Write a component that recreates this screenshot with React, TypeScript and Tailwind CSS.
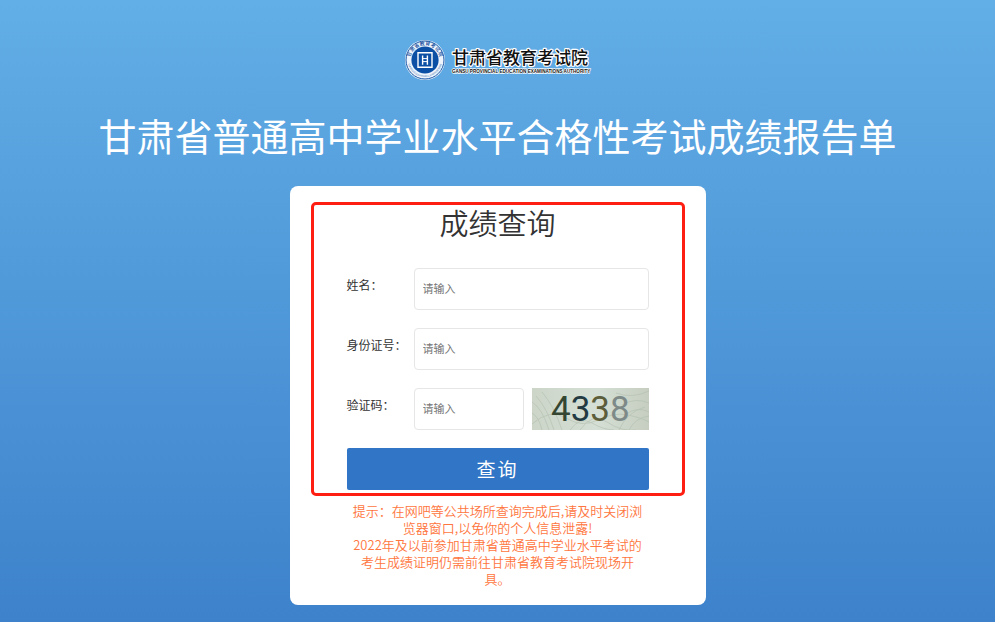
import React, { useState } from 'react';

const CODE_DIGITS = [
  { value: '4', color: '#344632' },
  { value: '3', color: '#233a42' },
  { value: '3', color: '#5c5d3a' },
  { value: '8', color: '#7d8a88' },
];

const inputClass =
  'h-[42px] min-w-0 rounded-[4px] border border-[#e6e6e6] bg-white px-2 pb-[2px] text-[11px] text-[#333333] placeholder:text-[#757575] focus:border-[#3075c6] focus:outline-none';

const labelClass = 'w-[67px] shrink-0 text-xs leading-[34px] text-[#333333]';

const Logo: React.FC = () => (
  <svg width="188" height="42" viewBox="0 0 188 42" role="img" aria-label="甘肃省教育考试院">
    <defs>
      <path id="ring-top" d="M6.6 24 A14.7 14.7 0 1 1 35.4 24" />
      <path id="ring-bottom" d="M4 24 A17.3 17.3 0 0 0 38 24" />
    </defs>
    <circle cx="21" cy="21" r="20" fill="#eef5fc" />
    <circle cx="21" cy="21" r="19" fill="none" stroke="#1c58a8" strokeWidth="1" />
    <circle cx="21" cy="21" r="13.6" fill="#0c50a6" />
    <text fontSize="5" fontWeight="500" fill="#174f9c" textAnchor="middle" fontFamily="'Noto Sans CJK SC', sans-serif">
      <textPath href="#ring-top" startOffset="50%">甘肃省教育考试院</textPath>
    </text>
    <text fontSize="2.6" fill="#3c6dae" textAnchor="middle" fontFamily="'Liberation Sans', sans-serif">
      <textPath href="#ring-bottom" startOffset="50%">GANSU EDUCATION EXAMINATIONS</textPath>
    </text>
    {/* Square seal in the middle of the emblem */}
    <g fill="none" stroke="#ffffff" strokeWidth="1.4">
      <path d="M13.3 13.8 H28.7 M14 13.8 V28.2 H28 V13.8" />
      <path d="M18.6 16.4 V25.8 M23.4 16.4 V25.8" />
      <path d="M18.6 19.6 H23.4 M18.6 22.6 H23.4" strokeWidth="1" />
    </g>
    <g stroke="#ffffff" strokeLinejoin="round" paintOrder="stroke" fill="#111111">
      <text x="48" y="25" fontSize="17" fontWeight="500" strokeWidth="2.4" fontFamily="'Noto Sans CJK SC', sans-serif">
        甘肃省教育考试院
      </text>
      <text x="48" y="34" fontSize="4.6" fontWeight="700" strokeWidth="1.4" fontFamily="'Liberation Sans', sans-serif">
        GANSU PROVINCIAL EDUCATION EXAMINATIONS AUTHORITY
      </text>
    </g>
  </svg>
);

const CodeImage: React.FC = () => (
  <svg className="block h-full w-full" viewBox="0 0 117 42" aria-hidden="true">
    <defs>
      <linearGradient id="code-bg" x1="0" y1="0" x2="1" y2="0">
        <stop offset="0" stopColor="#ccd5c8" />
        <stop offset="0.55" stopColor="#d6dfd5" />
        <stop offset="1" stopColor="#c5cec0" />
      </linearGradient>
    </defs>
    <rect width="117" height="42" fill="url(#code-bg)" />
    <g fill="none" stroke="#b3bfb0" strokeWidth="0.8" opacity="0.75">
      <path d="M0 14 Q10 20 17 42 M4 8 Q15 20 22 42 M10 4 Q22 18 30 42 M0 25 Q7 29 10 42" />
      <path d="M0 36 Q18 20 34 30 T66 32 T96 27 T117 34" />
      <path d="M38 42 Q48 28 60 35 T82 42 M48 42 Q60 24 75 34 T104 42" />
      <path d="M84 5 Q100 11 117 3 M90 17 Q103 9 117 15 M94 26 Q106 18 117 24" />
      <path d="M87 42 Q95 24 113 19 M97 42 Q103 30 117 28" />
    </g>
    <text x="19" y="33" fontSize="35" fontFamily="Roboto, sans-serif">
      {CODE_DIGITS.map((digit, i) => (
        <tspan key={i} fill={digit.color}>{digit.value}</tspan>
      ))}
    </text>
  </svg>
);

const App: React.FC = () => {
  const [name, setName] = useState('');
  const [idNumber, setIdNumber] = useState('');
  const [code, setCode] = useState('');

  return (
    <main className="flex min-h-screen flex-col items-center bg-linear-to-b from-[#62aee6] to-[#3d82cb] pt-[39px] pb-[17px] font-['Noto_Sans_CJK_SC',sans-serif]">
      <Logo />

      <h1 className="mt-[30px] text-center text-[38px] leading-12 font-normal text-white">
        甘肃省普通高中学业水平合格性考试成绩报告单
      </h1>

      <section className="mt-[27px] w-full max-w-[416px] rounded-[8px] bg-white px-[21px] pt-4 pb-[18px]">
        <form
          className="flex flex-col gap-[18px] rounded-[5px] border-3 border-[#ff1e12] px-[33px] pb-[3px]"
          onSubmit={e => e.preventDefault()}
        >
          <h2 className="mb-[11px] text-center text-[29px] leading-[34px] font-[350] text-[#333333]">成绩查询</h2>

          <div className="flex items-start">
            <label htmlFor="name" className={labelClass}>姓名：</label>
            <input
              id="name"
              className={`${inputClass} flex-1`}
              placeholder="请输入"
              value={name}
              onChange={e => setName(e.target.value)}
            />
          </div>

          <div className="flex items-start">
            <label htmlFor="id-number" className={labelClass}>身份证号：</label>
            <input
              id="id-number"
              className={`${inputClass} flex-1`}
              placeholder="请输入"
              value={idNumber}
              onChange={e => setIdNumber(e.target.value)}
            />
          </div>

          <div className="flex items-start">
            <label htmlFor="code" className={labelClass}>验证码：</label>
            <input
              id="code"
              className={`${inputClass} flex-1`}
              placeholder="请输入"
              value={code}
              onChange={e => setCode(e.target.value)}
            />
            <button type="button" aria-label="换一张" className="ml-2 h-[42px] w-[117px] shrink-0 cursor-pointer">
              <CodeImage />
            </button>
          </div>

          <button
            type="submit"
            className="h-[42px] cursor-pointer rounded-[2px] bg-[#3075c6] text-[19px] tracking-[2px] text-white"
          >
            查询
          </button>
        </form>

        <p className="mt-[6px] text-center text-[13px] leading-[17px] font-[350] text-[#ff7640]">
          提示：在网吧等公共场所查询完成后,请及时关闭浏
          <br />
          览器窗口,以免你的个人信息泄露!
          <br />
          2022年及以前参加甘肃省普通高中学业水平考试的
          <br />
          考生成绩证明仍需前往甘肃省教育考试院现场开
          <br />
          具。
        </p>
      </section>
    </main>
  );
};

export default App;
